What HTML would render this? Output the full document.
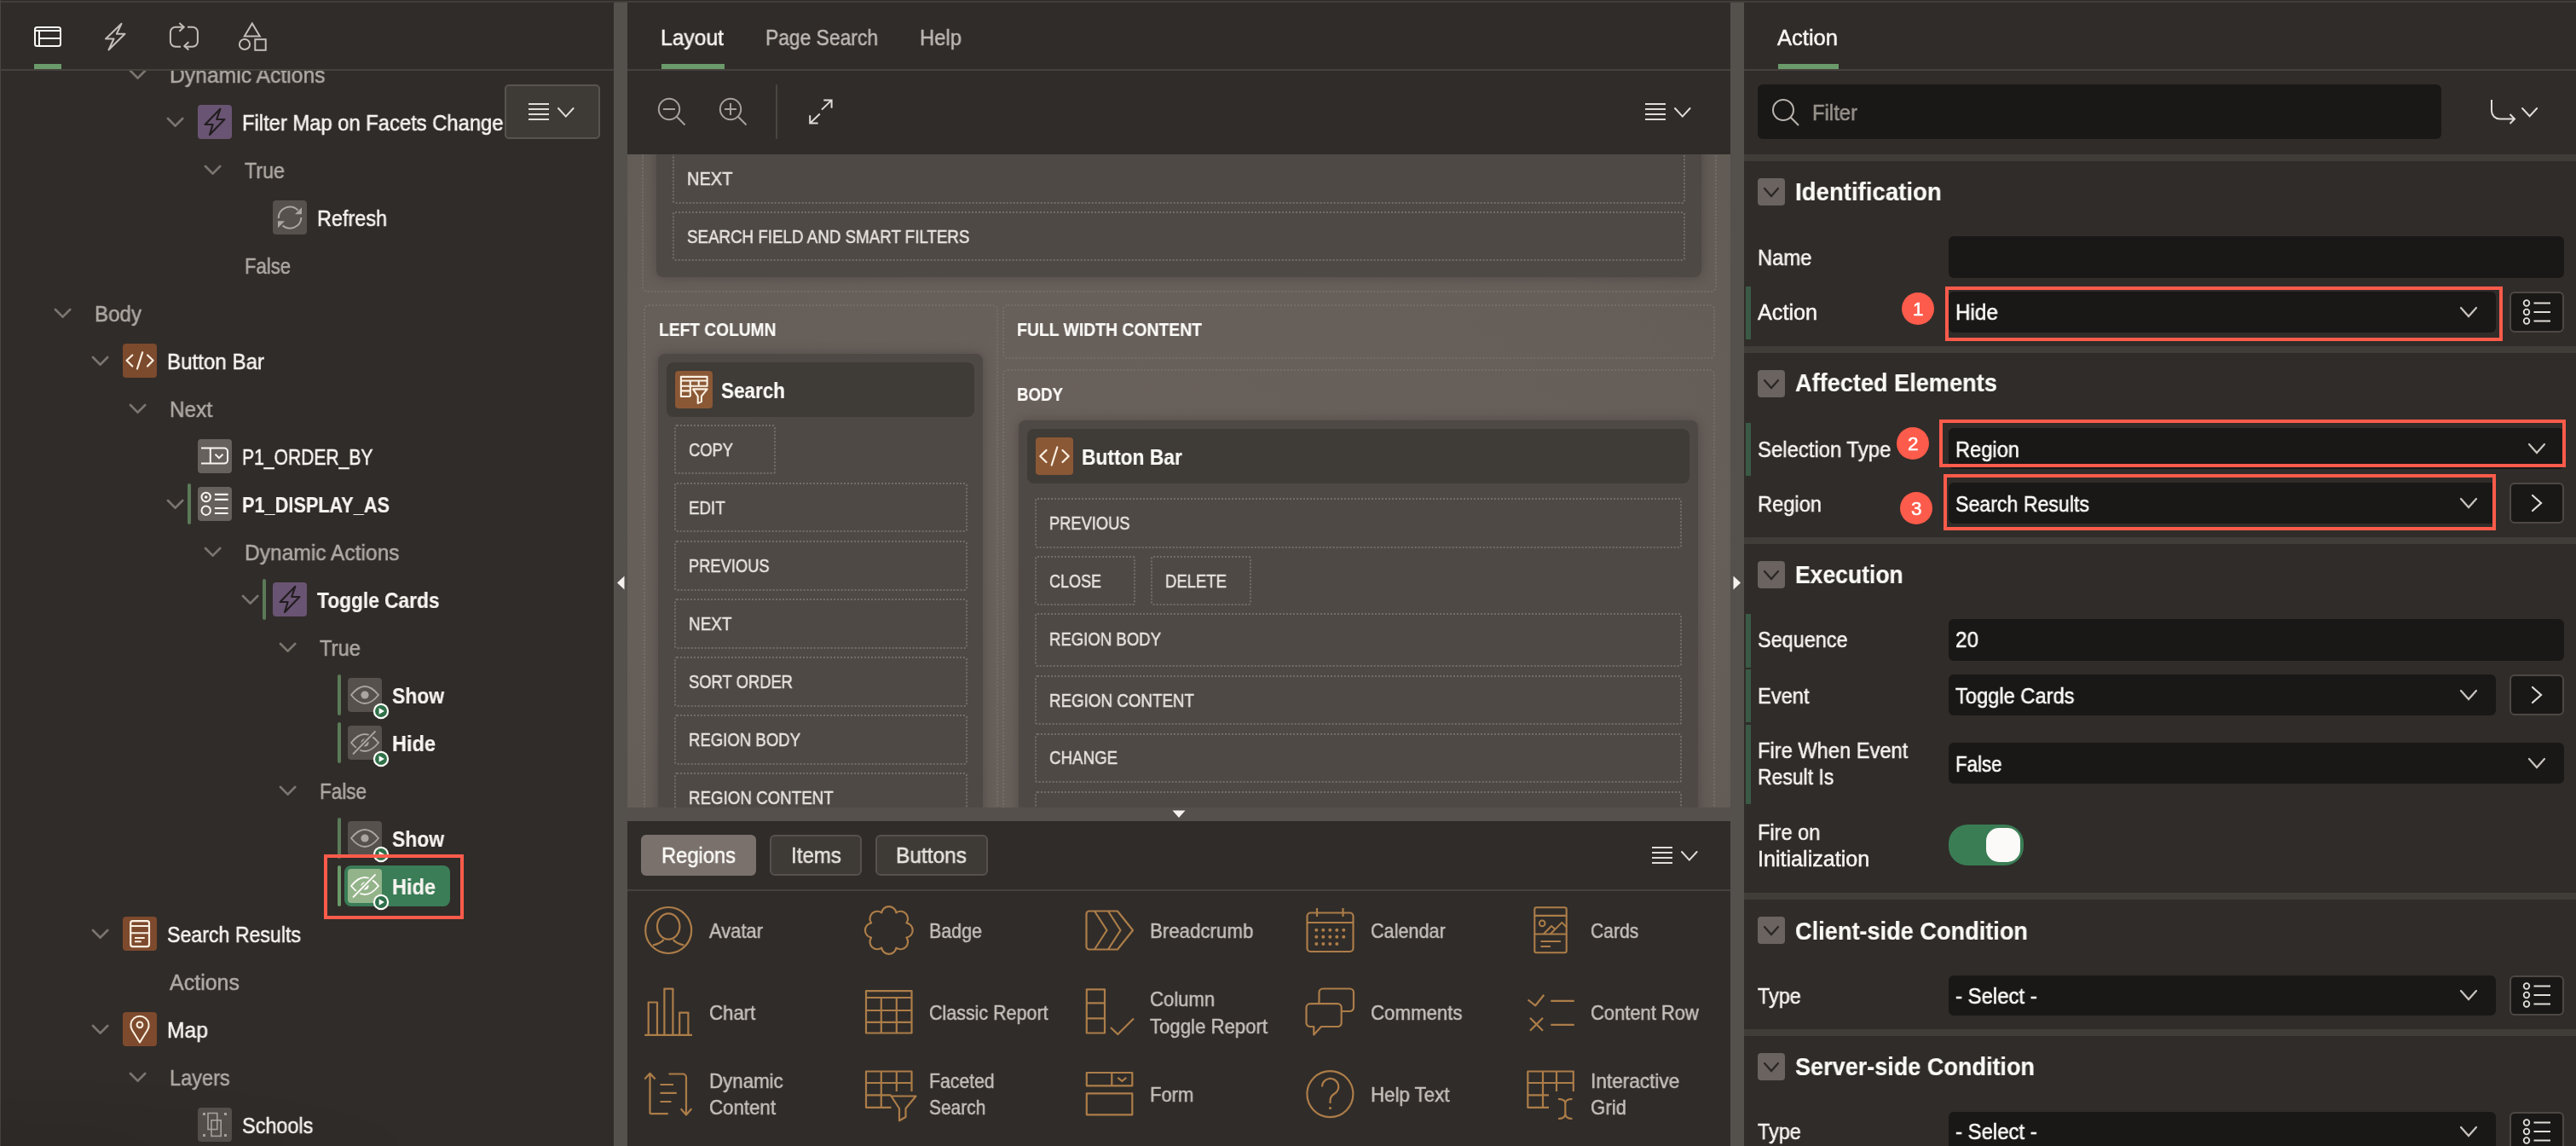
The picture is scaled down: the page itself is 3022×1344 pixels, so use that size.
<!DOCTYPE html>
<html><head><meta charset="utf-8"><style>
html,body{margin:0;padding:0;width:3022px;height:1344px;overflow:hidden;background:#302c29}
body{position:relative;font-family:"Liberation Sans",sans-serif}
body div, body svg{position:absolute}
.t{white-space:nowrap;transform-origin:0 0;-webkit-text-stroke:0.5px currentColor;will-change:transform}
.clip{overflow:hidden}
.clip div,.clip svg{position:absolute}
</style></head><body>
<div style="left:0;top:0;width:3022px;height:1344px;background:#302c29"></div>
<div style="left:0px;top:1px;width:3022px;height:2px;background:#423e3a;border-radius:0px;"></div>
<div style="left:0px;top:0px;width:1px;height:1344px;background:#4a4541;border-radius:0px;"></div>
<svg style="left:151.4px;top:80.5px;" width="21.2" height="12.6" viewBox="0 0 21.2 12.6"><path d="M2 2 L10.6 10.6 L19.2 2" fill="none" stroke="#7b7570" stroke-width="2.7" stroke-linecap="round"/></svg>
<div class="t" style="left:199.0px;top:75.84px;font-size:25px;line-height:25px;font-weight:400;color:#aea8a3;transform:scaleX(0.9876);">Dynamic Actions</div>
<svg style="left:195.4px;top:136.5px;" width="21.2" height="12.6" viewBox="0 0 21.2 12.6"><path d="M2 2 L10.6 10.6 L19.2 2" fill="none" stroke="#7b7570" stroke-width="2.7" stroke-linecap="round"/></svg>
<svg style="left:232px;top:123px;" width="40" height="40" viewBox="0 0 40 40"><rect x="0" y="0" width="40" height="40" rx="4" fill="#6a5473"/><path d="M26.3 4.8 L8.6 23 H17.6 L14 35 L31.4 17 H22.2 Z" fill="none" stroke="#221d20" stroke-width="2.2" stroke-linejoin="round"/></svg>
<div class="t" style="left:283.5px;top:131.84px;font-size:25px;line-height:25px;font-weight:400;color:#f7f4f0;transform:scaleX(0.9507);">Filter Map on Facets Change</div>
<svg style="left:239.4px;top:192.5px;" width="21.2" height="12.6" viewBox="0 0 21.2 12.6"><path d="M2 2 L10.6 10.6 L19.2 2" fill="none" stroke="#7b7570" stroke-width="2.7" stroke-linecap="round"/></svg>
<div class="t" style="left:287.0px;top:187.84px;font-size:25px;line-height:25px;font-weight:400;color:#aea8a3;transform:scaleX(0.9311);">True</div>
<svg style="left:320px;top:235px;" width="40" height="40" viewBox="0 0 40 40"><rect x="0" y="0" width="40" height="40" rx="4" fill="#56514d"/><path d="M6.8 21 A13.3 13.3 0 0 1 29.5 11.5" fill="none" stroke="#aba6a1" stroke-width="2"/><path d="M33.4 20 A13.3 13.3 0 0 1 11.5 29.5" fill="none" stroke="#aba6a1" stroke-width="2"/><path d="M34 8.3 V16.3 H26 Z" fill="#aba6a1"/><path d="M6 24.3 H14 L6 32.3 Z" fill="#aba6a1"/></svg>
<div class="t" style="left:371.5px;top:243.84px;font-size:25px;line-height:25px;font-weight:400;color:#f7f4f0;transform:scaleX(0.9367);">Refresh</div>
<div class="t" style="left:287.0px;top:299.84px;font-size:25px;line-height:25px;font-weight:400;color:#aea8a3;transform:scaleX(0.8833);">False</div>
<svg style="left:63.400000000000006px;top:360.5px;" width="21.2" height="12.6" viewBox="0 0 21.2 12.6"><path d="M2 2 L10.6 10.6 L19.2 2" fill="none" stroke="#7b7570" stroke-width="2.7" stroke-linecap="round"/></svg>
<div class="t" style="left:111.0px;top:355.84px;font-size:25px;line-height:25px;font-weight:400;color:#aea8a3;transform:scaleX(0.9652);">Body</div>
<svg style="left:107.4px;top:416.5px;" width="21.2" height="12.6" viewBox="0 0 21.2 12.6"><path d="M2 2 L10.6 10.6 L19.2 2" fill="none" stroke="#7b7570" stroke-width="2.7" stroke-linecap="round"/></svg>
<svg style="left:144px;top:403px;" width="40" height="40" viewBox="0 0 40 40"><rect x="0" y="0" width="40" height="40" rx="4" fill="#7c4a2d"/><path d="M11.3 13.5 L4.6 19.8 L11.3 26.5 M29 13.5 L35.6 19.8 L29 26.5 M23.2 10.2 L17 29.5" fill="none" stroke="#fbf1e3" stroke-width="2.2" stroke-linecap="round" stroke-linejoin="round"/></svg>
<div class="t" style="left:195.5px;top:411.84px;font-size:25px;line-height:25px;font-weight:400;color:#f7f4f0;transform:scaleX(0.9650);">Button Bar</div>
<svg style="left:151.4px;top:472.5px;" width="21.2" height="12.6" viewBox="0 0 21.2 12.6"><path d="M2 2 L10.6 10.6 L19.2 2" fill="none" stroke="#7b7570" stroke-width="2.7" stroke-linecap="round"/></svg>
<div class="t" style="left:199.0px;top:467.84px;font-size:25px;line-height:25px;font-weight:400;color:#aea8a3;transform:scaleX(0.9727);">Next</div>
<svg style="left:232px;top:515px;" width="40" height="40" viewBox="0 0 40 40"><rect x="0" y="0" width="40" height="40" rx="4" fill="#67615d"/><path d="M4 10.6 H31 A4 4 0 0 1 35 14.6 V24.6 A4 4 0 0 1 31 28.6 H4 M14.8 10.6 V28.6 M20.5 17.8 L25 22.2 L29.5 17.8" fill="none" stroke="#f7f4f0" stroke-width="2"/></svg>
<div class="t" style="left:283.5px;top:523.84px;font-size:25px;line-height:25px;font-weight:400;color:#f7f4f0;transform:scaleX(0.8433);">P1_ORDER_BY</div>
<svg style="left:195.4px;top:584.5px;" width="21.2" height="12.6" viewBox="0 0 21.2 12.6"><path d="M2 2 L10.6 10.6 L19.2 2" fill="none" stroke="#7b7570" stroke-width="2.7" stroke-linecap="round"/></svg>
<div style="left:220px;top:567px;width:4px;height:48px;background:#5b7a58;border-radius:2px;"></div>
<svg style="left:232px;top:571px;" width="40" height="40" viewBox="0 0 40 40"><rect x="0" y="0" width="40" height="40" rx="4" fill="#67615d"/><circle cx="9.7" cy="12" r="5.2" fill="none" stroke="#f7f4f0" stroke-width="2"/><circle cx="9.7" cy="12" r="1.8" fill="#f7f4f0"/><circle cx="9.7" cy="27.7" r="5.2" fill="none" stroke="#f7f4f0" stroke-width="2"/><path d="M19.9 8.8 H35.6 M19.9 14.8 H35.6 M19.9 25 H35.6 M19.9 31 H35.6" stroke="#f7f4f0" stroke-width="2.2"/></svg>
<div class="t" style="left:283.5px;top:579.84px;font-size:25px;line-height:25px;font-weight:700;color:#f7f4f0;transform:scaleX(0.8686);-webkit-text-stroke-width:0.2px;">P1_DISPLAY_AS</div>
<svg style="left:239.4px;top:640.5px;" width="21.2" height="12.6" viewBox="0 0 21.2 12.6"><path d="M2 2 L10.6 10.6 L19.2 2" fill="none" stroke="#7b7570" stroke-width="2.7" stroke-linecap="round"/></svg>
<div class="t" style="left:287.0px;top:635.84px;font-size:25px;line-height:25px;font-weight:400;color:#aea8a3;transform:scaleX(0.9822);">Dynamic Actions</div>
<svg style="left:283.4px;top:696.5px;" width="21.2" height="12.6" viewBox="0 0 21.2 12.6"><path d="M2 2 L10.6 10.6 L19.2 2" fill="none" stroke="#7b7570" stroke-width="2.7" stroke-linecap="round"/></svg>
<div style="left:308px;top:679px;width:4px;height:48px;background:#5b7a58;border-radius:2px;"></div>
<svg style="left:320px;top:683px;" width="40" height="40" viewBox="0 0 40 40"><rect x="0" y="0" width="40" height="40" rx="4" fill="#6a5473"/><path d="M26.3 4.8 L8.6 23 H17.6 L14 35 L31.4 17 H22.2 Z" fill="none" stroke="#221d20" stroke-width="2.2" stroke-linejoin="round"/></svg>
<div class="t" style="left:371.5px;top:691.84px;font-size:25px;line-height:25px;font-weight:700;color:#f7f4f0;transform:scaleX(0.9089);-webkit-text-stroke-width:0.2px;">Toggle Cards</div>
<svg style="left:327.4px;top:752.5px;" width="21.2" height="12.6" viewBox="0 0 21.2 12.6"><path d="M2 2 L10.6 10.6 L19.2 2" fill="none" stroke="#7b7570" stroke-width="2.7" stroke-linecap="round"/></svg>
<div class="t" style="left:375.0px;top:747.84px;font-size:25px;line-height:25px;font-weight:400;color:#aea8a3;transform:scaleX(0.9509);">True</div>
<div style="left:396px;top:791px;width:4px;height:48px;background:#5b7a58;border-radius:2px;"></div>
<svg style="left:408px;top:795px;" width="40" height="40" viewBox="0 0 40 40"><rect x="0" y="0" width="40" height="40" rx="4" fill="#56514d"/><path d="M4 20 Q20 0 36 20 Q20 40 4 20 Z" fill="none" stroke="#aaa5a0" stroke-width="1.8"/><circle cx="20" cy="20" r="4.6" fill="#aaa5a0"/></svg>
<svg style="left:437px;top:824px;" width="20" height="20" viewBox="0 0 20 20"><circle cx="10" cy="10" r="9.2" fill="#fbfaf7"/><circle cx="10" cy="10" r="7" fill="#2f7048"/><path d="M7.6 6.2 L14 10 L7.6 13.8 Z" fill="#fbfaf7"/></svg>
<div class="t" style="left:459.5px;top:803.84px;font-size:25px;line-height:25px;font-weight:700;color:#f7f4f0;transform:scaleX(0.9150);-webkit-text-stroke-width:0.2px;">Show</div>
<div style="left:396px;top:847px;width:4px;height:48px;background:#5b7a58;border-radius:2px;"></div>
<svg style="left:408px;top:851px;" width="40" height="40" viewBox="0 0 40 40"><rect x="0" y="0" width="40" height="40" rx="4" fill="#56514d"/><path d="M4 20 Q20 0 36 20 Q20 40 4 20 Z" fill="none" stroke="#aaa5a0" stroke-width="1.8"/><circle cx="20" cy="20" r="4.6" fill="#aaa5a0"/><path d="M32.5 6.5 L6 33.5" stroke="#56514d" stroke-width="5"/><path d="M32.5 6.5 L6 33.5" stroke="#aaa5a0" stroke-width="1.8"/></svg>
<svg style="left:437px;top:880px;" width="20" height="20" viewBox="0 0 20 20"><circle cx="10" cy="10" r="9.2" fill="#fbfaf7"/><circle cx="10" cy="10" r="7" fill="#2f7048"/><path d="M7.6 6.2 L14 10 L7.6 13.8 Z" fill="#fbfaf7"/></svg>
<div class="t" style="left:459.5px;top:859.84px;font-size:25px;line-height:25px;font-weight:700;color:#f7f4f0;transform:scaleX(0.9414);-webkit-text-stroke-width:0.2px;">Hide</div>
<svg style="left:327.4px;top:920.5px;" width="21.2" height="12.6" viewBox="0 0 21.2 12.6"><path d="M2 2 L10.6 10.6 L19.2 2" fill="none" stroke="#7b7570" stroke-width="2.7" stroke-linecap="round"/></svg>
<div class="t" style="left:375.0px;top:915.84px;font-size:25px;line-height:25px;font-weight:400;color:#aea8a3;transform:scaleX(0.8997);">False</div>
<div style="left:396px;top:959px;width:4px;height:48px;background:#5b7a58;border-radius:2px;"></div>
<svg style="left:408px;top:963px;" width="40" height="40" viewBox="0 0 40 40"><rect x="0" y="0" width="40" height="40" rx="4" fill="#56514d"/><path d="M4 20 Q20 0 36 20 Q20 40 4 20 Z" fill="none" stroke="#aaa5a0" stroke-width="1.8"/><circle cx="20" cy="20" r="4.6" fill="#aaa5a0"/></svg>
<svg style="left:437px;top:992px;" width="20" height="20" viewBox="0 0 20 20"><circle cx="10" cy="10" r="9.2" fill="#fbfaf7"/><circle cx="10" cy="10" r="7" fill="#2f7048"/><path d="M7.6 6.2 L14 10 L7.6 13.8 Z" fill="#fbfaf7"/></svg>
<div class="t" style="left:459.5px;top:971.84px;font-size:25px;line-height:25px;font-weight:700;color:#f7f4f0;transform:scaleX(0.9150);-webkit-text-stroke-width:0.2px;">Show</div>
<div style="left:404px;top:1015px;width:124px;height:48px;background:#3a7d57;border-radius:8px;"></div>
<div style="left:396px;top:1015px;width:4px;height:48px;background:#6b9a6b;border-radius:2px;"></div>
<svg style="left:408px;top:1019px;" width="40" height="40" viewBox="0 0 40 40"><rect x="0" y="0" width="40" height="40" rx="4" fill="#93b48a"/><path d="M4 20 Q20 0 36 20 Q20 40 4 20 Z" fill="none" stroke="#fbfaf7" stroke-width="1.8"/><circle cx="20" cy="20" r="4.6" fill="#fbfaf7"/><path d="M32.5 6.5 L6 33.5" stroke="#93b48a" stroke-width="5"/><path d="M32.5 6.5 L6 33.5" stroke="#fbfaf7" stroke-width="1.8"/></svg>
<svg style="left:437px;top:1048px;" width="20" height="20" viewBox="0 0 20 20"><circle cx="10" cy="10" r="9.2" fill="#fbfaf7"/><circle cx="10" cy="10" r="7" fill="#2d6f4b"/><path d="M7.6 6.2 L14 10 L7.6 13.8 Z" fill="#fbfaf7"/></svg>
<div class="t" style="left:459.5px;top:1027.84px;font-size:25px;line-height:25px;font-weight:700;color:#f7f4f0;transform:scaleX(0.9414);-webkit-text-stroke-width:0.2px;">Hide</div>
<svg style="left:107.4px;top:1088.5px;" width="21.2" height="12.6" viewBox="0 0 21.2 12.6"><path d="M2 2 L10.6 10.6 L19.2 2" fill="none" stroke="#7b7570" stroke-width="2.7" stroke-linecap="round"/></svg>
<svg style="left:144px;top:1075px;" width="40" height="40" viewBox="0 0 40 40"><rect x="0" y="0" width="40" height="40" rx="4" fill="#7e4a2d"/><rect x="9.2" y="5.2" width="21.8" height="29.9" rx="2.5" fill="none" stroke="#fbf1e3" stroke-width="2.2"/><path d="M9.2 11.1 H31 M9.2 19.2 H31 M14 25.1 H25.7 M14 29.2 H21.7" stroke="#fbf1e3" stroke-width="2"/></svg>
<div class="t" style="left:195.5px;top:1083.84px;font-size:25px;line-height:25px;font-weight:400;color:#f7f4f0;transform:scaleX(0.9261);">Search Results</div>
<div class="t" style="left:199.0px;top:1139.84px;font-size:25px;line-height:25px;font-weight:400;color:#aea8a3;transform:scaleX(1.0002);">Actions</div>
<svg style="left:107.4px;top:1200.5px;" width="21.2" height="12.6" viewBox="0 0 21.2 12.6"><path d="M2 2 L10.6 10.6 L19.2 2" fill="none" stroke="#7b7570" stroke-width="2.7" stroke-linecap="round"/></svg>
<svg style="left:144px;top:1187px;" width="40" height="40" viewBox="0 0 40 40"><rect x="0" y="0" width="40" height="40" rx="4" fill="#7e4a2d"/><path d="M20 35.5 L11 21 A10.6 10.6 0 1 1 29 21 Z" fill="none" stroke="#fbf1e3" stroke-width="2" stroke-linejoin="round"/><circle cx="20" cy="14.8" r="3.4" fill="none" stroke="#fbf1e3" stroke-width="2"/></svg>
<div class="t" style="left:195.5px;top:1195.84px;font-size:25px;line-height:25px;font-weight:400;color:#f7f4f0;transform:scaleX(0.9869);">Map</div>
<svg style="left:151.4px;top:1256.5px;" width="21.2" height="12.6" viewBox="0 0 21.2 12.6"><path d="M2 2 L10.6 10.6 L19.2 2" fill="none" stroke="#7b7570" stroke-width="2.7" stroke-linecap="round"/></svg>
<div class="t" style="left:199.0px;top:1251.84px;font-size:25px;line-height:25px;font-weight:400;color:#aea8a3;transform:scaleX(0.9422);">Layers</div>
<svg style="left:232px;top:1299px;" width="40" height="40" viewBox="0 0 40 40"><rect x="0" y="0" width="40" height="40" rx="4" fill="#55504c"/><rect x="6" y="6" width="3" height="3" fill="#aaa5a0"/><rect x="31" y="6" width="3" height="3" fill="#aaa5a0"/><rect x="6" y="31" width="3" height="3" fill="#aaa5a0"/><rect x="31" y="31" width="3" height="3" fill="#aaa5a0"/><rect x="12" y="6.5" width="10.8" height="19" fill="none" stroke="#aaa5a0" stroke-width="1.6"/><rect x="16" y="14.8" width="11.2" height="18.6" fill="none" stroke="#aaa5a0" stroke-width="1.6"/></svg>
<div class="t" style="left:283.5px;top:1307.84px;font-size:25px;line-height:25px;font-weight:400;color:#f7f4f0;transform:scaleX(0.9366);">Schools</div>
<div style="left:380px;top:1002px;width:164px;height:76px;border:4px solid #fd5b4b;border-radius:0px;box-sizing:border-box;"></div>
<div style="left:1px;top:3px;width:719px;height:78px;background:#302c29;border-radius:0px;"></div>
<div style="left:0px;top:81px;width:720px;height:2px;background:#45413d;border-radius:0px;"></div>
<div style="left:40px;top:75px;width:32px;height:6px;background:#6b9a6b;border-radius:0px;"></div>
<svg style="left:40px;top:31px;" width="32" height="24" viewBox="0 0 32 24"><rect x="1" y="1" width="30" height="22" rx="2.5" fill="none" stroke="#fbfaf7" stroke-width="2"/><path d="M1 5 H31 M6 5 V23 M6 14 H31" stroke="#fbfaf7" stroke-width="2"/></svg>
<svg style="left:122px;top:26px;" width="28" height="34" viewBox="0 0 28 34"><path d="M20.5 1.8 L2 19.5 H11.5 L5.5 32.5 L24.5 13.8 H14.8 Z" fill="none" stroke="#c4beb9" stroke-width="2" stroke-linejoin="round"/></svg>
<svg style="left:198px;top:25px;" width="36" height="36" viewBox="0 0 36 36"><path d="M17.7 6.8 H7.9 A6 6 0 0 0 1.9 12.8 V23.8 A6 6 0 0 0 7.9 29.8 H14" fill="none" stroke="#c4beb9" stroke-width="2"/><path d="M22 6.8 H27.9 A6 6 0 0 1 33.9 12.8 V23.8 A6 6 0 0 1 27.9 29.8 H18.5" fill="none" stroke="#c4beb9" stroke-width="2"/><path d="M12.4 2.1 L17.7 6.8 L12.4 11.7" fill="none" stroke="#c4beb9" stroke-width="2"/><path d="M23.3 24.2 L18.3 29 L23.3 33.5" fill="none" stroke="#c4beb9" stroke-width="2"/></svg>
<svg style="left:272px;top:25px;" width="44" height="36" viewBox="0 0 44 36"><path d="M23.8 2.5 L14.8 17.5 H32.8 Z" fill="none" stroke="#c4beb9" stroke-width="2" stroke-linejoin="miter"/><circle cx="15" cy="27" r="6.1" fill="none" stroke="#c4beb9" stroke-width="2"/><rect x="27.3" y="21.2" width="12.4" height="12.6" fill="none" stroke="#c4beb9" stroke-width="2"/></svg>
<div style="left:592px;top:99px;width:112px;height:64px;background:#3e3a36;border-radius:5px;border:2px solid #58534f;box-sizing:border-box"></div>
<svg style="left:620px;top:121px;" width="24" height="20" viewBox="0 0 24 20"><rect x="0" y="0" width="24" height="2" fill="#e0dcd8"/><rect x="0" y="6" width="24" height="2" fill="#e0dcd8"/><rect x="0" y="12" width="24" height="2" fill="#e0dcd8"/><rect x="0" y="18" width="24" height="2" fill="#e0dcd8"/></svg>
<svg style="left:653.2px;top:125.2px;" width="21.6" height="13.6" viewBox="0 0 21.6 13.6"><path d="M2 2 L10.8 11.6 L19.6 2" fill="none" stroke="#e0dcd8" stroke-width="2" stroke-linecap="round"/></svg>
<div style="left:0;top:1240px;width:720px;height:104px;background:radial-gradient(ellipse 480px 80px at 0px 104px, rgba(0,0,0,0.07), rgba(0,0,0,0) 100%)"></div>
<div style="left:720px;top:3px;width:16px;height:1341px;background:#54504c;border-radius:0px;"></div>
<svg style="left:723px;top:675px;" width="10" height="17" viewBox="0 0 10 17"><path d="M9.5 0.5 V16.5 L1 8.5 Z" fill="#f4f1ee"/></svg>
<div class="t" style="left:775.0px;top:31.84px;font-size:25px;line-height:25px;font-weight:400;color:#f7f4f0;transform:scaleX(0.9858);">Layout</div>
<div class="t" style="left:898.0px;top:31.84px;font-size:25px;line-height:25px;font-weight:400;color:#bdb7b2;transform:scaleX(0.9132);">Page Search</div>
<div class="t" style="left:1079.0px;top:31.84px;font-size:25px;line-height:25px;font-weight:400;color:#bdb7b2;transform:scaleX(0.9530);">Help</div>
<div style="left:736px;top:81px;width:1294px;height:2px;background:#45413d;border-radius:0px;"></div>
<div style="left:776px;top:75px;width:74px;height:6px;background:#6b9a6b;border-radius:0px;"></div>
<svg style="left:770px;top:113px;" width="36" height="36" viewBox="0 0 36 36"><circle cx="15" cy="15" r="12.2" fill="none" stroke="#a6a19c" stroke-width="2"/><path d="M23.8 23.8 L33.5 33.5 M8 15 H22" stroke="#a6a19c" stroke-width="2"/></svg>
<svg style="left:842px;top:113px;" width="36" height="36" viewBox="0 0 36 36"><circle cx="15" cy="15" r="12.2" fill="none" stroke="#a6a19c" stroke-width="2"/><path d="M23.8 23.8 L33.5 33.5 M8 15 H22 M15 8 V22" stroke="#a6a19c" stroke-width="2"/></svg>
<div style="left:910px;top:99px;width:2px;height:64px;background:#4a4541;border-radius:0px;"></div>
<svg style="left:947px;top:114px;" width="32" height="34" viewBox="0 0 32 34"><path d="M17 14.6 L28.6 3.4 M19.3 3.4 H28.6 V12.8 M14.8 19.5 L3.2 30.6 M3.2 21.3 V30.6 H12.6" fill="none" stroke="#e0dcd8" stroke-width="2"/></svg>
<svg style="left:1930px;top:121px;" width="24" height="20" viewBox="0 0 24 20"><rect x="0" y="0" width="24" height="2" fill="#e0dcd8"/><rect x="0" y="6" width="24" height="2" fill="#e0dcd8"/><rect x="0" y="12" width="24" height="2" fill="#e0dcd8"/><rect x="0" y="18" width="24" height="2" fill="#e0dcd8"/></svg>
<svg style="left:1963.2px;top:125.2px;" width="21.6" height="13.6" viewBox="0 0 21.6 13.6"><path d="M2 2 L10.8 11.6 L19.6 2" fill="none" stroke="#e0dcd8" stroke-width="2" stroke-linecap="round"/></svg>
<div class="clip" style="left:736px;top:181px;width:1294px;height:766px;overflow:hidden;background:radial-gradient(ellipse 90% 95% at 45% 55%, #6a615c 0%, #665e59 55%, #5e5853 100%)"><div style="left:-736px;top:-181px;width:3022px;height:1344px">
<div style="left:753px;top:60px;width:1261px;height:283px;border:2px dotted #736d69;border-radius:7px;box-sizing:border-box;"></div>
<div style="left:770px;top:120px;width:1226px;height:205px;background:#4e4945;border-radius:8px;box-shadow:0 0 14px rgba(0,0,0,0.22)"></div>
<div style="left:789px;top:120px;width:1188px;height:119px;border:2px dotted #736d69;border-radius:3px;box-sizing:border-box;"></div>
<div class="t" style="left:806.0px;top:199.80px;font-size:21.5px;line-height:21.5px;font-weight:400;color:#e6e2de;transform:scaleX(0.9330);">NEXT</div>
<div style="left:789px;top:248px;width:1188px;height:58px;border:2px dotted #736d69;border-radius:3px;box-sizing:border-box;"></div>
<div class="t" style="left:806.0px;top:267.80px;font-size:21.5px;line-height:21.5px;font-weight:400;color:#e6e2de;transform:scaleX(0.8725);">SEARCH FIELD AND SMART FILTERS</div>
<div style="left:755px;top:357px;width:416px;height:743px;border:2px dotted #736d69;border-radius:6px;box-sizing:border-box;"></div>
<div class="t" style="left:772.5px;top:377.30px;font-size:21.5px;line-height:21.5px;font-weight:700;color:#fbfaf7;transform:scaleX(0.8925);-webkit-text-stroke-width:0.2px;">LEFT COLUMN</div>
<div style="left:772px;top:415px;width:381px;height:685px;background:#4e4945;border-radius:8px;box-shadow:0 0 14px rgba(0,0,0,0.22)"></div>
<div style="left:782px;top:425px;width:361px;height:64px;background:#3f3b36;border-radius:8px;"></div>
<svg style="left:792px;top:435px;" width="44" height="44" viewBox="0 0 44 44"><rect x="0" y="0" width="44" height="44" rx="4" fill="#8b5836"/><g transform="translate(0.9 0.9)"><path d="M16.9 29.1 H6 V6 H36.7 V16.9 H6 M6 10.6 H36.7 M6 22.5 H16.9 M16.9 10.6 V29.1 M26.8 10.6 V16.9" fill="none" stroke="#fbf1e3" stroke-width="2.1" stroke-linejoin="round"/><path d="M20.2 20.5 H36.7 L30 28.8 V35.2 L25.8 37 V28.8 Z" fill="none" stroke="#fbf1e3" stroke-width="2.1" stroke-linejoin="round"/></g></svg>
<div class="t" style="left:845.5px;top:446.34px;font-size:25px;line-height:25px;font-weight:700;color:#fbfaf7;transform:scaleX(0.8994);-webkit-text-stroke-width:0.2px;">Search</div>
<div style="left:791px;top:497.5px;width:118.5px;height:58.5px;border:2px dotted #736d69;border-radius:3px;box-sizing:border-box;"></div>
<div class="t" style="left:808.0px;top:517.80px;font-size:21.5px;line-height:21.5px;font-weight:400;color:#e6e2de;transform:scaleX(0.8534);">COPY</div>
<div style="left:791px;top:566px;width:343.5px;height:58px;border:2px dotted #736d69;border-radius:3px;box-sizing:border-box;"></div>
<div class="t" style="left:808.0px;top:586.30px;font-size:21.5px;line-height:21.5px;font-weight:400;color:#e6e2de;transform:scaleX(0.8729);">EDIT</div>
<div style="left:791px;top:634px;width:343.5px;height:58.5px;border:2px dotted #736d69;border-radius:3px;box-sizing:border-box;"></div>
<div class="t" style="left:808.0px;top:654.30px;font-size:21.5px;line-height:21.5px;font-weight:400;color:#e6e2de;transform:scaleX(0.8514);">PREVIOUS</div>
<div style="left:791px;top:702px;width:343.5px;height:58.5px;border:2px dotted #736d69;border-radius:3px;box-sizing:border-box;"></div>
<div class="t" style="left:808.0px;top:722.30px;font-size:21.5px;line-height:21.5px;font-weight:400;color:#e6e2de;transform:scaleX(0.8807);">NEXT</div>
<div style="left:791px;top:770px;width:343.5px;height:58.5px;border:2px dotted #736d69;border-radius:3px;box-sizing:border-box;"></div>
<div class="t" style="left:808.0px;top:790.30px;font-size:21.5px;line-height:21.5px;font-weight:400;color:#e6e2de;transform:scaleX(0.8557);">SORT ORDER</div>
<div style="left:791px;top:838px;width:343.5px;height:58.5px;border:2px dotted #736d69;border-radius:3px;box-sizing:border-box;"></div>
<div class="t" style="left:808.0px;top:858.30px;font-size:21.5px;line-height:21.5px;font-weight:400;color:#e6e2de;transform:scaleX(0.8634);">REGION BODY</div>
<div style="left:791px;top:906px;width:343.5px;height:58.5px;border:2px dotted #736d69;border-radius:3px;box-sizing:border-box;"></div>
<div class="t" style="left:808.0px;top:926.30px;font-size:21.5px;line-height:21.5px;font-weight:400;color:#e6e2de;transform:scaleX(0.8716);">REGION CONTENT</div>
<div style="left:1176px;top:357px;width:836px;height:64px;border:2px dotted #736d69;border-radius:6px;box-sizing:border-box;"></div>
<div class="t" style="left:1193.0px;top:377.30px;font-size:21.5px;line-height:21.5px;font-weight:700;color:#fbfaf7;transform:scaleX(0.9010);-webkit-text-stroke-width:0.2px;">FULL WIDTH CONTENT</div>
<div style="left:1176px;top:433px;width:836px;height:667px;border:2px dotted #736d69;border-radius:6px;box-sizing:border-box;"></div>
<div class="t" style="left:1193.0px;top:453.30px;font-size:21.5px;line-height:21.5px;font-weight:700;color:#fbfaf7;transform:scaleX(0.8693);-webkit-text-stroke-width:0.2px;">BODY</div>
<div style="left:1195px;top:493px;width:797px;height:607px;background:#4e4945;border-radius:8px;box-shadow:0 0 14px rgba(0,0,0,0.22)"></div>
<div style="left:1205px;top:503px;width:777px;height:64px;background:#3f3b36;border-radius:8px;"></div>
<svg style="left:1215px;top:513px;" width="44" height="44" viewBox="0 0 44 44"><rect x="0" y="0" width="44" height="44" rx="4" fill="#8b5836"/><path d="M12.5 15 L5.3 22 L12.5 29 M31.5 15 L38.7 22 L31.5 29 M25.3 11.5 L18.7 32.5" fill="none" stroke="#fbf1e3" stroke-width="2.2" stroke-linecap="round" stroke-linejoin="round"/></svg>
<div class="t" style="left:1268.5px;top:524.34px;font-size:25px;line-height:25px;font-weight:700;color:#fbfaf7;transform:scaleX(0.9121);-webkit-text-stroke-width:0.2px;">Button Bar</div>
<div style="left:1214px;top:584px;width:759px;height:58.5px;border:2px dotted #736d69;border-radius:3px;box-sizing:border-box;"></div>
<div class="t" style="left:1231.0px;top:603.80px;font-size:21.5px;line-height:21.5px;font-weight:400;color:#e6e2de;transform:scaleX(0.8505);">PREVIOUS</div>
<div style="left:1214px;top:651.5px;width:118px;height:58.5px;border:2px dotted #736d69;border-radius:3px;box-sizing:border-box;"></div>
<div class="t" style="left:1231.0px;top:671.80px;font-size:21.5px;line-height:21.5px;font-weight:400;color:#e6e2de;transform:scaleX(0.8369);">CLOSE</div>
<div style="left:1349.5px;top:651.5px;width:118.5px;height:58.5px;border:2px dotted #736d69;border-radius:3px;box-sizing:border-box;"></div>
<div class="t" style="left:1367.0px;top:671.80px;font-size:21.5px;line-height:21.5px;font-weight:400;color:#e6e2de;transform:scaleX(0.8608);">DELETE</div>
<div style="left:1214px;top:719px;width:759px;height:63px;border:2px dotted #736d69;border-radius:3px;box-sizing:border-box;"></div>
<div class="t" style="left:1231.0px;top:739.80px;font-size:21.5px;line-height:21.5px;font-weight:400;color:#e6e2de;transform:scaleX(0.8634);">REGION BODY</div>
<div style="left:1214px;top:791.5px;width:759px;height:58.5px;border:2px dotted #736d69;border-radius:3px;box-sizing:border-box;"></div>
<div class="t" style="left:1231.0px;top:812.30px;font-size:21.5px;line-height:21.5px;font-weight:400;color:#e6e2de;transform:scaleX(0.8731);">REGION CONTENT</div>
<div style="left:1214px;top:859.5px;width:759px;height:58.5px;border:2px dotted #736d69;border-radius:3px;box-sizing:border-box;"></div>
<div class="t" style="left:1231.0px;top:879.30px;font-size:21.5px;line-height:21.5px;font-weight:400;color:#e6e2de;transform:scaleX(0.8697);">CHANGE</div>
<div style="left:1214px;top:927.5px;width:759px;height:62.5px;border:2px dotted #736d69;border-radius:3px;box-sizing:border-box;"></div>
</div></div>
<div style="left:736px;top:947px;width:1294px;height:16px;background:#55504c;border-radius:0px;"></div>
<svg style="left:1375px;top:950px;" width="16" height="10" viewBox="0 0 16 10"><path d="M0.5 0.5 H15.5 L8 9 Z" fill="#f4f1ee"/></svg>
<div style="left:752px;top:979px;width:135px;height:48px;background:#7a716c;border-radius:6px;"></div>
<div class="t" style="left:775.5px;top:991.34px;font-size:25px;line-height:25px;font-weight:400;color:#fbfaf7;transform:scaleX(0.9485);">Regions</div>
<div style="left:903px;top:979px;width:108px;height:48px;background:#3e3a36;border-radius:6px;border:2px solid #56514d;box-sizing:border-box"></div>
<div class="t" style="left:927.5px;top:991.34px;font-size:25px;line-height:25px;font-weight:400;color:#e6e2de;transform:scaleX(0.9653);">Items</div>
<div style="left:1027px;top:979px;width:132px;height:48px;background:#3e3a36;border-radius:6px;border:2px solid #56514d;box-sizing:border-box"></div>
<div class="t" style="left:1050.5px;top:991.34px;font-size:25px;line-height:25px;font-weight:400;color:#e6e2de;transform:scaleX(0.9790);">Buttons</div>
<svg style="left:1938px;top:993px;" width="24" height="20" viewBox="0 0 24 20"><rect x="0" y="0" width="24" height="2" fill="#e0dcd8"/><rect x="0" y="6" width="24" height="2" fill="#e0dcd8"/><rect x="0" y="12" width="24" height="2" fill="#e0dcd8"/><rect x="0" y="18" width="24" height="2" fill="#e0dcd8"/></svg>
<svg style="left:1970.7px;top:997.2px;" width="21.6" height="13.6" viewBox="0 0 21.6 13.6"><path d="M2 2 L10.8 11.6 L19.6 2" fill="none" stroke="#e0dcd8" stroke-width="2" stroke-linecap="round"/></svg>
<div style="left:736px;top:1043px;width:1294px;height:2px;background:#45413d;border-radius:0px;"></div>
<svg style="left:0;top:0" width="3022" height="1344" viewBox="0 0 3022 1344"><circle cx="784.2" cy="1091" r="27" fill="none" stroke="#ac7d49" stroke-width="2.2"/><ellipse cx="784.2" cy="1086.5" rx="13.2" ry="15.2" fill="none" stroke="#ac7d49" stroke-width="2.2"/><path d="M766 1108.5 Q775 1106.5 778.7 1102 M802.4 1108.5 Q793.4 1106.5 789.7 1102" fill="none" stroke="#ac7d49" stroke-width="2.2" stroke-linejoin="round"/><path d="M1034.23 1070.31 A8.7 8.7 0 0 1 1051.37 1070.31 A8.7 8.7 0 0 1 1063.49 1082.43 A8.7 8.7 0 0 1 1063.49 1099.57 A8.7 8.7 0 0 1 1051.37 1111.69 A8.7 8.7 0 0 1 1034.23 1111.69 A8.7 8.7 0 0 1 1022.11 1099.57 A8.7 8.7 0 0 1 1022.11 1082.43 A8.7 8.7 0 0 1 1034.23 1070.31 Z" fill="none" stroke="#ac7d49" stroke-width="2.2" stroke-linejoin="round"/><path d="M1278 1068.5 H1311 L1329 1091 L1311 1113.5 H1278 A3.5 3.5 0 0 1 1274.5 1110 V1072 A3.5 3.5 0 0 1 1278 1068.5 Z" fill="none" stroke="#ac7d49" stroke-width="2.2" stroke-linejoin="round"/><path d="M1284 1068.5 L1298.5 1091 L1284 1113.5 M1300 1068.5 L1314.5 1091 L1300 1113.5" fill="none" stroke="#ac7d49" stroke-width="2.2" stroke-linejoin="round"/><path d="M1537.5 1070.5 H1583.5 A4 4 0 0 1 1587.5 1074.5 V1112 A4 4 0 0 1 1583.5 1116 H1537.5 A4 4 0 0 1 1533.5 1112 V1074.5 A4 4 0 0 1 1537.5 1070.5 Z" fill="none" stroke="#ac7d49" stroke-width="2.2" stroke-linejoin="round"/><path d="M1533.5 1082 H1587.5 M1545 1065 V1075 M1575.5 1065 V1075" fill="none" stroke="#ac7d49" stroke-width="2.2" stroke-linejoin="round"/><circle cx="1544.30" cy="1090.8" r="2" fill="#ac7d49"/><circle cx="1552.30" cy="1090.8" r="2" fill="#ac7d49"/><circle cx="1560.30" cy="1090.8" r="2" fill="#ac7d49"/><circle cx="1568.30" cy="1090.8" r="2" fill="#ac7d49"/><circle cx="1576.30" cy="1090.8" r="2" fill="#ac7d49"/><circle cx="1544.30" cy="1098.8" r="2" fill="#ac7d49"/><circle cx="1552.30" cy="1098.8" r="2" fill="#ac7d49"/><circle cx="1560.30" cy="1098.8" r="2" fill="#ac7d49"/><circle cx="1568.30" cy="1098.8" r="2" fill="#ac7d49"/><circle cx="1576.30" cy="1098.8" r="2" fill="#ac7d49"/><circle cx="1544.30" cy="1107" r="2" fill="#ac7d49"/><circle cx="1552.30" cy="1107" r="2" fill="#ac7d49"/><circle cx="1560.30" cy="1107" r="2" fill="#ac7d49"/><circle cx="1568.30" cy="1107" r="2" fill="#ac7d49"/><path d="M1802.3 1064.3 H1835.7 A2 2 0 0 1 1837.7 1066.3 V1115.2 A2 2 0 0 1 1835.7 1117.2 H1802.3 A2 2 0 0 1 1800.3 1115.2 V1066.3 A2 2 0 0 1 1802.3 1064.3 Z M1800.3 1073.9 H1837.7 M1800.3 1095.5 H1837.7" fill="none" stroke="#ac7d49" stroke-width="2.1" stroke-linejoin="round"/><circle cx="1809.2" cy="1082.9" r="3.3" fill="none" stroke="#ac7d49" stroke-width="2"/><path d="M1810.7 1095.5 L1820.1 1086 L1824 1089.5 M1818.7 1095.5 L1832.3 1081.9 L1837.7 1087.2 M1807.5 1103.9 H1831 M1807.5 1109.9 H1819" fill="none" stroke="#ac7d49" stroke-width="2" stroke-linejoin="round"/><path d="M756.2 1213.8 H812 M760.7 1213.8 V1175.5 H771 V1213.8 M779.4 1213.8 V1159.6 H789.4 V1213.8 M797.2 1213.8 V1187.6 H807.4 V1213.8" fill="none" stroke="#ac7d49" stroke-width="2.2" stroke-linejoin="round"/><path d="M1016 1162.2 H1069.5 V1211.5 H1016 Z M1016 1170 H1069.5 M1016 1185 H1069.5 M1016 1198.8 H1069.5 M1033.8 1170 V1211.5 M1051.8 1170 V1211.5" fill="none" stroke="#ac7d49" stroke-width="2.2" stroke-linejoin="round"/><path d="M1274.8 1160.3 H1296 V1211.5 H1274.8 Z M1274.8 1176.3 H1296 M1274.8 1194.3 H1296" fill="none" stroke="#ac7d49" stroke-width="2.2" stroke-linejoin="round"/><path d="M1303 1205 L1311.3 1213 L1330 1194.5" fill="none" stroke="#ac7d49" stroke-width="2.2" stroke-linejoin="round"/><path d="M1547.5 1177 V1164 A4.5 4.5 0 0 1 1552 1159.5 H1583.5 A4.5 4.5 0 0 1 1588 1164 V1181.5 A4.5 4.5 0 0 1 1583.5 1186 H1573.7" fill="none" stroke="#ac7d49" stroke-width="2.2" stroke-linejoin="round"/><path d="M1537 1177.2 H1569.2 A4.5 4.5 0 0 1 1573.7 1181.7 V1199.5 A4.5 4.5 0 0 1 1569.2 1204 H1550 L1541.3 1213.5 V1204 H1537 A4.5 4.5 0 0 1 1532.5 1199.5 V1181.7 A4.5 4.5 0 0 1 1537 1177.2 Z" fill="none" stroke="#ac7d49" stroke-width="2.2" stroke-linejoin="round"/><path d="M1792.5 1172.5 L1801.3 1179.3 L1811.3 1166.8 M1819.3 1173.8 H1846.8 M1795 1193.8 L1810 1208.8 M1810 1193.8 L1795 1208.8 M1819.3 1201.8 H1846.8" fill="none" stroke="#ac7d49" stroke-width="2.2" stroke-linejoin="round"/><path d="M762.5 1306.2 V1259.5 M756.3 1265.5 L762.5 1258.8 L768.7 1265.5 M784.5 1259.5 H801 A4 4 0 0 1 805 1263.5 V1306.5 M798.7 1300.3 L805 1307.5 L811.3 1300.3 M762.5 1306.2 H783.8" fill="none" stroke="#ac7d49" stroke-width="2.2" stroke-linejoin="round"/><path d="M774.5 1272 H790 M774.5 1281.8 H793.8 M774.5 1292 H787.5" fill="none" stroke="#ac7d49" stroke-width="2.2" stroke-linejoin="round"/><path d="M1045.5 1298.8 H1016 V1256.5 H1069.5 V1280 M1016 1270 H1069.5 M1016 1284.3 H1045.5 M1033.8 1256.5 V1298.8 M1051.8 1256.5 V1280" fill="none" stroke="#ac7d49" stroke-width="2.2" stroke-linejoin="round"/><path d="M1045.5 1285.5 H1074.5 L1062.5 1300 V1310 L1055 1314.3 V1300 Z" fill="none" stroke="#ac7d49" stroke-width="2.2" stroke-linejoin="round"/><path d="M1274.8 1258 H1328.3 V1273.3 H1274.8 Z M1304.3 1258 V1273.3 M1311.3 1263.8 L1316.3 1268 L1321.3 1263.8 M1274.8 1282.3 H1328.3 V1307.3 H1274.8 Z" fill="none" stroke="#ac7d49" stroke-width="2.2" stroke-linejoin="round"/><circle cx="1560.4" cy="1283.1" r="27" fill="none" stroke="#ac7d49" stroke-width="2.2"/><path d="M1551 1274.5 A9.6 9.6 0 1 1 1565 1283 Q1560.5 1286 1560.5 1291 V1294" fill="none" stroke="#ac7d49" stroke-width="2.2" stroke-linejoin="round"/><circle cx="1560.5" cy="1299.5" r="1.6" fill="#ac7d49"/><path d="M1817 1298.8 H1792.3 V1256.5 H1845.8 V1280 M1792.3 1270 H1845.8 M1792.3 1284.3 H1817 M1810 1256.5 V1298.8 M1826 1256.5 V1280" fill="none" stroke="#ac7d49" stroke-width="2.2" stroke-linejoin="round"/><path d="M1828 1288.8 Q1836.3 1289 1836.3 1294 V1306.3 Q1836.3 1312 1828 1312 M1844.5 1288.8 Q1836.3 1289 1836.3 1294 M1836.3 1306.3 Q1836.3 1312 1844.5 1312" fill="none" stroke="#ac7d49" stroke-width="2.2" stroke-linejoin="round"/></svg>
<div class="t" style="left:831.5px;top:1079.68px;font-size:24px;line-height:24px;font-weight:400;color:#c5bfba;transform:scaleX(0.9139);">Avatar</div>
<div class="t" style="left:1090.2px;top:1079.68px;font-size:24px;line-height:24px;font-weight:400;color:#c5bfba;transform:scaleX(0.8934);">Badge</div>
<div class="t" style="left:1349.0px;top:1079.68px;font-size:24px;line-height:24px;font-weight:400;color:#c5bfba;transform:scaleX(0.9275);">Breadcrumb</div>
<div class="t" style="left:1608.0px;top:1079.68px;font-size:24px;line-height:24px;font-weight:400;color:#c5bfba;transform:scaleX(0.9009);">Calendar</div>
<div class="t" style="left:1866.2px;top:1079.68px;font-size:24px;line-height:24px;font-weight:400;color:#c5bfba;transform:scaleX(0.8786);">Cards</div>
<div class="t" style="left:831.5px;top:1175.68px;font-size:24px;line-height:24px;font-weight:400;color:#c5bfba;transform:scaleX(0.9244);">Chart</div>
<div class="t" style="left:1090.2px;top:1175.68px;font-size:24px;line-height:24px;font-weight:400;color:#c5bfba;transform:scaleX(0.8939);">Classic Report</div>
<div class="t" style="left:1349.0px;top:1159.68px;font-size:24px;line-height:24px;font-weight:400;color:#c5bfba;transform:scaleX(0.9220);">Column</div>
<div class="t" style="left:1349.0px;top:1191.68px;font-size:24px;line-height:24px;font-weight:400;color:#c5bfba;transform:scaleX(0.9235);">Toggle Report</div>
<div class="t" style="left:1608.0px;top:1175.68px;font-size:24px;line-height:24px;font-weight:400;color:#c5bfba;transform:scaleX(0.9265);">Comments</div>
<div class="t" style="left:1866.2px;top:1175.68px;font-size:24px;line-height:24px;font-weight:400;color:#c5bfba;transform:scaleX(0.9136);">Content Row</div>
<div class="t" style="left:831.5px;top:1255.68px;font-size:24px;line-height:24px;font-weight:400;color:#c5bfba;transform:scaleX(0.9293);">Dynamic</div>
<div class="t" style="left:831.5px;top:1287.18px;font-size:24px;line-height:24px;font-weight:400;color:#c5bfba;transform:scaleX(0.9279);">Content</div>
<div class="t" style="left:1090.2px;top:1255.68px;font-size:24px;line-height:24px;font-weight:400;color:#c5bfba;transform:scaleX(0.8850);">Faceted</div>
<div class="t" style="left:1090.2px;top:1287.18px;font-size:24px;line-height:24px;font-weight:400;color:#c5bfba;transform:scaleX(0.8712);">Search</div>
<div class="t" style="left:1349.0px;top:1271.68px;font-size:24px;line-height:24px;font-weight:400;color:#c5bfba;transform:scaleX(0.9153);">Form</div>
<div class="t" style="left:1608.0px;top:1271.68px;font-size:24px;line-height:24px;font-weight:400;color:#c5bfba;transform:scaleX(0.9286);">Help Text</div>
<div class="t" style="left:1866.2px;top:1255.68px;font-size:24px;line-height:24px;font-weight:400;color:#c5bfba;transform:scaleX(0.9429);">Interactive</div>
<div class="t" style="left:1866.2px;top:1287.18px;font-size:24px;line-height:24px;font-weight:400;color:#c5bfba;transform:scaleX(0.9263);">Grid</div>
<div style="left:2030px;top:3px;width:16px;height:1341px;background:#54504c;border-radius:0px;"></div>
<svg style="left:2033px;top:675px;" width="10" height="17" viewBox="0 0 10 17"><path d="M0.5 0.5 V16.5 L9 8.5 Z" fill="#f4f1ee"/></svg>
<div class="t" style="left:2085.0px;top:31.84px;font-size:25px;line-height:25px;font-weight:400;color:#f7f4f0;transform:scaleX(1.0218);">Action</div>
<div style="left:2046px;top:81px;width:976px;height:2px;background:#45413d;border-radius:0px;"></div>
<div style="left:2086px;top:75px;width:71px;height:6px;background:#6b9a6b;border-radius:0px;"></div>
<div style="left:2062px;top:99px;width:802px;height:64px;background:#1a1817;border-radius:6px;"></div>
<svg style="left:2076px;top:113px;" width="38" height="38" viewBox="0 0 38 38"><circle cx="16" cy="16" r="12" fill="none" stroke="#b9b3ae" stroke-width="2"/><path d="M24.8 24.8 L34 34" stroke="#b9b3ae" stroke-width="2"/></svg>
<div class="t" style="left:2126.0px;top:119.84px;font-size:25px;line-height:25px;font-weight:400;color:#99938e;transform:scaleX(0.9540);">Filter</div>
<svg style="left:2919px;top:116px;" width="36" height="36" viewBox="0 0 36 36"><path d="M4 1 V14 A9.5 9.5 0 0 0 13.5 23.5 H31 M25.5 18 L31 23.5 L25.5 29" fill="none" stroke="#e0dcd8" stroke-width="2"/></svg>
<svg style="left:2957.4px;top:125.4px;" width="21.2" height="13.2" viewBox="0 0 21.2 13.2"><path d="M2 2 L10.6 11.2 L19.2 2" fill="none" stroke="#e0dcd8" stroke-width="2" stroke-linecap="round"/></svg>
<div style="left:2046px;top:181px;width:976px;height:8px;background:#403c38;border-radius:0px;"></div>
<div style="left:2046px;top:406px;width:976px;height:8px;background:#403c38;border-radius:0px;"></div>
<div style="left:2046px;top:630px;width:976px;height:8px;background:#403c38;border-radius:0px;"></div>
<div style="left:2046px;top:1047px;width:976px;height:8px;background:#403c38;border-radius:0px;"></div>
<div style="left:2046px;top:1207px;width:976px;height:8px;background:#403c38;border-radius:0px;"></div>
<div style="left:2062px;top:209px;width:32px;height:32px;background:#6a6360;border-radius:4px;"></div>
<svg style="left:2068px;top:219.0px;" width="20" height="13.0" viewBox="0 0 20 13.0"><path d="M2 2 L10 11.0 L18 2" fill="none" stroke="#2a2624" stroke-width="2.2" stroke-linecap="round"/></svg>
<div class="t" style="left:2106.0px;top:210.95px;font-size:29px;line-height:29px;font-weight:700;color:#fbfaf7;transform:scaleX(0.9518);-webkit-text-stroke-width:0.2px;">Identification</div>
<div style="left:2062px;top:434px;width:32px;height:32px;background:#6a6360;border-radius:4px;"></div>
<svg style="left:2068px;top:444.0px;" width="20" height="13.0" viewBox="0 0 20 13.0"><path d="M2 2 L10 11.0 L18 2" fill="none" stroke="#2a2624" stroke-width="2.2" stroke-linecap="round"/></svg>
<div class="t" style="left:2106.0px;top:435.45px;font-size:29px;line-height:29px;font-weight:700;color:#fbfaf7;transform:scaleX(0.9357);-webkit-text-stroke-width:0.2px;">Affected Elements</div>
<div style="left:2062px;top:658px;width:32px;height:32px;background:#6a6360;border-radius:4px;"></div>
<svg style="left:2068px;top:668.0px;" width="20" height="13.0" viewBox="0 0 20 13.0"><path d="M2 2 L10 11.0 L18 2" fill="none" stroke="#2a2624" stroke-width="2.2" stroke-linecap="round"/></svg>
<div class="t" style="left:2106.0px;top:659.95px;font-size:29px;line-height:29px;font-weight:700;color:#fbfaf7;transform:scaleX(0.9146);-webkit-text-stroke-width:0.2px;">Execution</div>
<div style="left:2062px;top:1075px;width:32px;height:32px;background:#6a6360;border-radius:4px;"></div>
<svg style="left:2068px;top:1085.0px;" width="20" height="13.0" viewBox="0 0 20 13.0"><path d="M2 2 L10 11.0 L18 2" fill="none" stroke="#2a2624" stroke-width="2.2" stroke-linecap="round"/></svg>
<div class="t" style="left:2106.0px;top:1077.95px;font-size:29px;line-height:29px;font-weight:700;color:#fbfaf7;transform:scaleX(0.9362);-webkit-text-stroke-width:0.2px;">Client-side Condition</div>
<div style="left:2062px;top:1235px;width:32px;height:32px;background:#6a6360;border-radius:4px;"></div>
<svg style="left:2068px;top:1245.0px;" width="20" height="13.0" viewBox="0 0 20 13.0"><path d="M2 2 L10 11.0 L18 2" fill="none" stroke="#2a2624" stroke-width="2.2" stroke-linecap="round"/></svg>
<div class="t" style="left:2106.0px;top:1237.45px;font-size:29px;line-height:29px;font-weight:700;color:#fbfaf7;transform:scaleX(0.9325);-webkit-text-stroke-width:0.2px;">Server-side Condition</div>
<div class="t" style="left:2062.0px;top:289.84px;font-size:25px;line-height:25px;font-weight:400;color:#f7f4f0;transform:scaleX(0.9507);">Name</div>
<div style="left:2286px;top:277px;width:722px;height:49px;background:#1a1817;border-radius:6px;"></div>
<div style="left:2048px;top:336px;width:6px;height:62px;background:#3a5a45;border-radius:0px;"></div>
<div class="t" style="left:2062.0px;top:354.34px;font-size:25px;line-height:25px;font-weight:400;color:#f7f4f0;transform:scaleX(1.0074);">Action</div>
<div style="left:2286px;top:342px;width:642px;height:48px;background:#1a1817;border-radius:6px;"></div>
<div class="t" style="left:2293.5px;top:354.34px;font-size:25px;line-height:25px;font-weight:400;color:#fbfaf7;transform:scaleX(0.9724);">Hide</div>
<svg style="left:2885px;top:359px;" width="22" height="14" viewBox="0 0 22 14"><path d="M2 2 L11 12 L20 2" fill="none" stroke="#c9c4bf" stroke-width="2.2" stroke-linecap="round"/></svg>
<div style="left:2944px;top:342px;width:64px;height:48px;background:#1a1817;border-radius:6px;border:2px solid #4d4844;box-sizing:border-box"></div>
<svg style="left:2956px;top:350px;" width="40" height="32" viewBox="0 0 40 32"><circle cx="8" cy="5.50" r="3.3" fill="none" stroke="#e0dcd8" stroke-width="1.8"/><circle cx="8" cy="16.00" r="3.3" fill="none" stroke="#e0dcd8" stroke-width="1.8"/><circle cx="8" cy="26.50" r="3.3" fill="none" stroke="#e0dcd8" stroke-width="1.8"/><path d="M16.5 5.50 H36" stroke="#e0dcd8" stroke-width="2"/><path d="M16.5 16.00 H36" stroke="#e0dcd8" stroke-width="2"/><path d="M16.5 26.50 H36" stroke="#e0dcd8" stroke-width="2"/></svg>
<div style="left:2048px;top:496px;width:6px;height:62px;background:#3a5a45;border-radius:0px;"></div>
<div class="t" style="left:2062.0px;top:514.84px;font-size:25px;line-height:25px;font-weight:400;color:#f7f4f0;transform:scaleX(0.9554);">Selection Type</div>
<div style="left:2286px;top:502px;width:722px;height:48px;background:#1a1817;border-radius:6px;"></div>
<div class="t" style="left:2293.5px;top:514.84px;font-size:25px;line-height:25px;font-weight:400;color:#fbfaf7;transform:scaleX(0.9467);">Region</div>
<svg style="left:2965px;top:519px;" width="22" height="14" viewBox="0 0 22 14"><path d="M2 2 L11 12 L20 2" fill="none" stroke="#c9c4bf" stroke-width="2.2" stroke-linecap="round"/></svg>
<div class="t" style="left:2062.0px;top:578.84px;font-size:25px;line-height:25px;font-weight:400;color:#f7f4f0;transform:scaleX(0.9467);">Region</div>
<div style="left:2286px;top:566px;width:642px;height:48px;background:#1a1817;border-radius:6px;"></div>
<div class="t" style="left:2293.5px;top:578.84px;font-size:25px;line-height:25px;font-weight:400;color:#fbfaf7;transform:scaleX(0.9261);">Search Results</div>
<svg style="left:2885px;top:583px;" width="22" height="14" viewBox="0 0 22 14"><path d="M2 2 L11 12 L20 2" fill="none" stroke="#c9c4bf" stroke-width="2.2" stroke-linecap="round"/></svg>
<div style="left:2944px;top:566px;width:64px;height:48px;background:#1a1817;border-radius:6px;border:2px solid #4d4844;box-sizing:border-box"></div>
<svg style="left:2969px;top:579.0px;" width="14" height="22" viewBox="0 0 14 22"><path d="M2 2 L12 11 L2 20" fill="none" stroke="#e0dcd8" stroke-width="2.2" stroke-linecap="round"/></svg>
<div style="left:2048px;top:720px;width:6px;height:63px;background:#3a5a45;border-radius:0px;"></div>
<div class="t" style="left:2062.0px;top:737.84px;font-size:25px;line-height:25px;font-weight:400;color:#f7f4f0;transform:scaleX(0.9369);">Sequence</div>
<div style="left:2286px;top:726px;width:722px;height:49px;background:#1a1817;border-radius:6px;"></div>
<div class="t" style="left:2293.5px;top:737.84px;font-size:25px;line-height:25px;font-weight:400;color:#fbfaf7;transform:scaleX(0.9709);">20</div>
<div style="left:2048px;top:785px;width:6px;height:62px;background:#3a5a45;border-radius:0px;"></div>
<div class="t" style="left:2062.0px;top:803.84px;font-size:25px;line-height:25px;font-weight:400;color:#f7f4f0;transform:scaleX(0.9464);">Event</div>
<div style="left:2286px;top:791px;width:642px;height:48px;background:#1a1817;border-radius:6px;"></div>
<div class="t" style="left:2293.5px;top:803.84px;font-size:25px;line-height:25px;font-weight:400;color:#fbfaf7;transform:scaleX(0.9470);">Toggle Cards</div>
<svg style="left:2885px;top:808px;" width="22" height="14" viewBox="0 0 22 14"><path d="M2 2 L11 12 L20 2" fill="none" stroke="#c9c4bf" stroke-width="2.2" stroke-linecap="round"/></svg>
<div style="left:2944px;top:791px;width:64px;height:48px;background:#1a1817;border-radius:6px;border:2px solid #4d4844;box-sizing:border-box"></div>
<svg style="left:2969px;top:804.0px;" width="14" height="22" viewBox="0 0 14 22"><path d="M2 2 L12 11 L2 20" fill="none" stroke="#e0dcd8" stroke-width="2.2" stroke-linecap="round"/></svg>
<div style="left:2048px;top:849.5px;width:6px;height:93.5px;background:#3a5a45;border-radius:0px;"></div>
<div class="t" style="left:2062.0px;top:867.84px;font-size:25px;line-height:25px;font-weight:400;color:#f7f4f0;transform:scaleX(0.9466);">Fire When Event</div>
<div class="t" style="left:2062.0px;top:898.84px;font-size:25px;line-height:25px;font-weight:400;color:#f7f4f0;transform:scaleX(0.9177);">Result Is</div>
<div style="left:2286px;top:871px;width:722px;height:48px;background:#1a1817;border-radius:6px;"></div>
<div class="t" style="left:2293.5px;top:883.84px;font-size:25px;line-height:25px;font-weight:400;color:#fbfaf7;transform:scaleX(0.8915);">False</div>
<svg style="left:2965px;top:888px;" width="22" height="14" viewBox="0 0 22 14"><path d="M2 2 L11 12 L20 2" fill="none" stroke="#c9c4bf" stroke-width="2.2" stroke-linecap="round"/></svg>
<div class="t" style="left:2062.0px;top:963.84px;font-size:25px;line-height:25px;font-weight:400;color:#f7f4f0;transform:scaleX(0.9414);">Fire on</div>
<div class="t" style="left:2062.0px;top:994.84px;font-size:25px;line-height:25px;font-weight:400;color:#f7f4f0;transform:scaleX(1.0047);">Initialization</div>
<div style="left:2286px;top:967px;width:88px;height:48px;background:#3a7d55;border-radius:22px;"></div>
<div style="left:2330px;top:971px;width:40px;height:40px;background:#fbfaf8;border-radius:15px;"></div>
<div class="t" style="left:2062.0px;top:1155.84px;font-size:25px;line-height:25px;font-weight:400;color:#f7f4f0;transform:scaleX(0.9363);">Type</div>
<div style="left:2286px;top:1143.5px;width:642px;height:47.5px;background:#1a1817;border-radius:6px;"></div>
<div class="t" style="left:2293.5px;top:1155.84px;font-size:25px;line-height:25px;font-weight:400;color:#fbfaf7;transform:scaleX(0.9572);">- Select -</div>
<svg style="left:2885px;top:1160px;" width="22" height="14" viewBox="0 0 22 14"><path d="M2 2 L11 12 L20 2" fill="none" stroke="#c9c4bf" stroke-width="2.2" stroke-linecap="round"/></svg>
<div style="left:2944px;top:1143.5px;width:64px;height:47.5px;background:#1a1817;border-radius:6px;border:2px solid #4d4844;box-sizing:border-box"></div>
<svg style="left:2956px;top:1151px;" width="40" height="32" viewBox="0 0 40 32"><circle cx="8" cy="5.50" r="3.3" fill="none" stroke="#e0dcd8" stroke-width="1.8"/><circle cx="8" cy="16.00" r="3.3" fill="none" stroke="#e0dcd8" stroke-width="1.8"/><circle cx="8" cy="26.50" r="3.3" fill="none" stroke="#e0dcd8" stroke-width="1.8"/><path d="M16.5 5.50 H36" stroke="#e0dcd8" stroke-width="2"/><path d="M16.5 16.00 H36" stroke="#e0dcd8" stroke-width="2"/><path d="M16.5 26.50 H36" stroke="#e0dcd8" stroke-width="2"/></svg>
<div class="t" style="left:2062.0px;top:1314.84px;font-size:25px;line-height:25px;font-weight:400;color:#f7f4f0;transform:scaleX(0.9363);">Type</div>
<div style="left:2286px;top:1303.5px;width:642px;height:47.5px;background:#1a1817;border-radius:6px;"></div>
<div class="t" style="left:2293.5px;top:1314.84px;font-size:25px;line-height:25px;font-weight:400;color:#fbfaf7;transform:scaleX(0.9572);">- Select -</div>
<svg style="left:2885px;top:1320px;" width="22" height="14" viewBox="0 0 22 14"><path d="M2 2 L11 12 L20 2" fill="none" stroke="#c9c4bf" stroke-width="2.2" stroke-linecap="round"/></svg>
<div style="left:2944px;top:1303.5px;width:64px;height:47.5px;background:#1a1817;border-radius:6px;border:2px solid #4d4844;box-sizing:border-box"></div>
<svg style="left:2956px;top:1311px;" width="40" height="32" viewBox="0 0 40 32"><circle cx="8" cy="5.50" r="3.3" fill="none" stroke="#e0dcd8" stroke-width="1.8"/><circle cx="8" cy="16.00" r="3.3" fill="none" stroke="#e0dcd8" stroke-width="1.8"/><circle cx="8" cy="26.50" r="3.3" fill="none" stroke="#e0dcd8" stroke-width="1.8"/><path d="M16.5 5.50 H36" stroke="#e0dcd8" stroke-width="2"/><path d="M16.5 16.00 H36" stroke="#e0dcd8" stroke-width="2"/><path d="M16.5 26.50 H36" stroke="#e0dcd8" stroke-width="2"/></svg>
<div style="left:2282px;top:336px;width:654px;height:64px;border:4px solid #fd5b4b;border-radius:0px;box-sizing:border-box;"></div>
<div style="left:2274.5px;top:492px;width:735.5px;height:56px;border:4px solid #fd5b4b;border-radius:0px;box-sizing:border-box;"></div>
<div style="left:2280px;top:556px;width:648px;height:66px;border:4px solid #fd5b4b;border-radius:0px;box-sizing:border-box;"></div>
<svg style="left:2230px;top:342px;" width="40" height="40" viewBox="0 0 40 40"><circle cx="20" cy="20" r="19" fill="#fd5b4b"/></svg>
<div class="t" style="left:2243.7px;top:352.38px;font-size:22px;line-height:22px;font-weight:400;color:#ffffff;transform:scaleX(1.0216);">1</div>
<svg style="left:2224px;top:500px;" width="40" height="40" viewBox="0 0 40 40"><circle cx="20" cy="20" r="19" fill="#fd5b4b"/></svg>
<div class="t" style="left:2237.7px;top:510.38px;font-size:22px;line-height:22px;font-weight:400;color:#ffffff;transform:scaleX(1.0216);">2</div>
<svg style="left:2228px;top:576px;" width="40" height="40" viewBox="0 0 40 40"><circle cx="20" cy="20" r="19" fill="#fd5b4b"/></svg>
<div class="t" style="left:2241.7px;top:586.38px;font-size:22px;line-height:22px;font-weight:400;color:#ffffff;transform:scaleX(1.0216);">3</div>
</body></html>
